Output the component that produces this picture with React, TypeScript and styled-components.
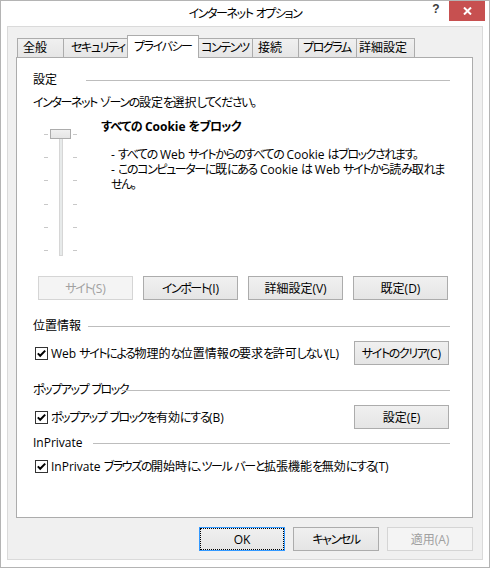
import React from "react";
import styled, { createGlobalStyle } from "styled-components";

const FONT = `"Open Sans", "Noto Sans CJK JP", sans-serif`;

const GlobalStyle = createGlobalStyle`
  html, body { margin: 0; padding: 0; background: #ffffff; }
  body {
    font-family: ${FONT};
    font-size: 12px;
    color: #000;
    font-feature-settings: "palt" 1;
  }
  * { box-sizing: border-box; }
`;

/* Kana runs are set tighter, as the condensed kana of the original UI font */
const Kana = styled.span`
  letter-spacing: -1.4px;
`;

const jp = (s: string) =>
  s.split(/([\u3000-\u30ff]+)/).map((part, i) =>
    /[\u3000-\u30ff]/.test(part) ? <Kana key={i}>{part}</Kana> : part
  );

const Window = styled.div`
  width: 490px;
  height: 568px;
  border: 1px solid #b4b4b4;
  background: #ffffff;
  display: flex;
  flex-direction: column;
`;

const TitleBar = styled.div`
  height: 25px;
  flex: none;
  display: grid;
  grid-template-columns: 1fr auto 1fr;
  align-items: start;
`;

const TitleText = styled.div`
  grid-column: 2;
  margin-top: 5px;
  line-height: 15px;
  white-space: nowrap;
`;

const TitleControls = styled.div`
  grid-column: 3;
  justify-self: end;
  display: flex;
  align-items: flex-start;
  margin-right: 4px;
`;

const HelpButton = styled.div`
  width: 26px;
  height: 20px;
  display: flex;
  justify-content: center;
  padding-top: 2px;
  font-family: "Liberation Sans", sans-serif;
  font-weight: bold;
  font-size: 12px;
  line-height: 12px;
  color: #3c3c3c;
`;

const CloseButton = styled.div`
  width: 36px;
  height: 20px;
  background: #c75050;
  display: flex;
  align-items: center;
  justify-content: center;
`;

const Client = styled.div`
  flex: 1;
  margin: 0 6px 7px 6px;
  background: #f0f0f0;
  border: 1px solid #dadada;
  padding: 8px 9px 8px 8px;
  display: flex;
  flex-direction: column;
`;

const TabStrip = styled.div`
  height: 23px;
  flex: none;
  display: flex;
  align-items: flex-end;
  padding-left: 1px;
`;

const Tab = styled.div<{ $w: number; $pl: number; $active?: boolean }>`
  position: relative;
  flex: none;
  width: ${(p) => p.$w + (p.$active ? 4 : 0)}px;
  height: ${(p) => (p.$active ? 23 : 20)}px;
  margin-left: ${(p) => (p.$active ? -3 : -1)}px;
  margin-right: ${(p) => (p.$active ? -2 : 0)}px;
  z-index: ${(p) => (p.$active ? 2 : 0)};
  border: 1px solid #acacac;
  border-bottom: none;
  background: ${(p) =>
    p.$active ? "#ffffff" : "linear-gradient(#f0f0f0, #e5e5e5)"};
  padding-top: ${(p) => (p.$active ? 3 : 1)}px;
  padding-left: ${(p) => p.$pl}px;
  line-height: 15px;
  white-space: nowrap;
  &:first-child { margin-left: 0; }
`;

const Pane = styled.div`
  position: relative;
  z-index: 1;
  flex: 1;
  margin-top: -1px;
  background: #ffffff;
  border: 1px solid #acacac;
  padding: 14px 22px 0 16px;
  display: flex;
  flex-direction: column;
`;

const SectionHeader = styled.div<{ $label: number; $mt: number }>`
  display: grid;
  grid-template-columns: ${(p) => p.$label}px 1fr;
  align-items: center;
  height: 15px;
  line-height: 15px;
  margin-top: ${(p) => p.$mt}px;
  white-space: nowrap;
`;

const Rule = styled.div`
  height: 1px;
  background: #bdbdbd;
  margin-top: 1px;
`;

const Text = styled.div<{ $mt?: number }>`
  line-height: 15px;
  margin-top: ${(p) => p.$mt ?? 0}px;
  white-space: nowrap;
`;

const SliderBlock = styled.div`
  display: flex;
  margin-top: 9px;
`;

const SliderBox = styled.div`
  position: relative;
  flex: none;
  width: 33px;
  height: 128px;
  margin-left: 11px;
  margin-top: 9px;
`;

const TickColumn = styled.div`
  height: 100%;
  display: flex;
  flex-direction: column;
  justify-content: space-between;
  padding: 6px 0 5px 0;
`;

const TickRow = styled.div`
  height: 1px;
  display: flex;
  justify-content: space-between;
`;

const Tick = styled.span`
  width: 4px;
  height: 1px;
  background: #c8c8c8;
`;

const Track = styled.div`
  position: absolute;
  left: 15px;
  top: 9px;
  bottom: 0;
  width: 4px;
  background: #e7eaea;
  border: 1px solid #d6d6d6;
`;

const Thumb = styled.div`
  position: absolute;
  left: 6px;
  top: 1px;
  width: 21px;
  height: 10px;
  background: linear-gradient(#f0f0f0, #e5e5e5);
  border: 1px solid #acacac;
`;

const LevelText = styled.div`
  margin-left: 24px;
  display: flex;
  flex-direction: column;
`;

const LevelTitle = styled.div`
  font-weight: bold;
  line-height: 15px;
  white-space: nowrap;
  ${Kana} { letter-spacing: -0.7px; }
`;

const LevelDesc = styled.div`
  margin-top: 13px;
  padding-left: 10px;
  line-height: 15px;
  white-space: nowrap;
`;

const ButtonRow = styled.div`
  display: flex;
  gap: 10px;
  padding-left: 5px;
  margin-top: 20px;
`;

const Button = styled.div<{ $w: number; $disabled?: boolean; $focused?: boolean }>`
  width: ${(p) => p.$w}px;
  height: 24px;
  flex: none;
  display: flex;
  align-items: center;
  justify-content: center;
  white-space: nowrap;
  line-height: 15px;
  border: 1px solid
    ${(p) => (p.$focused ? "#3399ff" : p.$disabled ? "#d5d5d5" : "#acacac")};
  background: ${(p) =>
    p.$disabled ? "#f4f4f4" : "linear-gradient(#f0f0f0, #e5e5e5)"};
  color: ${(p) => (p.$disabled ? "#a0a0a0" : "#000")};
  outline: ${(p) => (p.$focused ? "1px dotted #000" : "none")};
  outline-offset: -2px;
`;

const ButtonLabel = styled.span`
  white-space: nowrap;
`;

const OptionRow = styled.div<{ $mt: number }>`
  display: flex;
  align-items: center;
  justify-content: space-between;
  margin-top: ${(p) => p.$mt}px;
  padding-left: 2px;
  padding-right: 1px;
  min-height: 15px;
`;

const CheckLabel = styled.label`
  display: flex;
  align-items: center;
  gap: 3px;
  line-height: 15px;
`;

const CheckText = styled.span`
  white-space: nowrap;
`;

const CheckBox = styled.span`
  width: 13px;
  height: 13px;
  flex: none;
  border: 1px solid #333333;
  background: #ffffff;
  display: flex;
  align-items: center;
  justify-content: center;
`;

const Footer = styled.div`
  flex: none;
  margin-top: 9px;
  display: flex;
  justify-content: flex-end;
  gap: 8px;
`;

const Check = ({ label }: { label: string }) => (
  <CheckLabel>
    <CheckBox>
      <svg width="11" height="11" viewBox="0 0 11 11">
        <polyline
          points="1.8,5.4 4.2,7.8 9.2,2.6"
          fill="none"
          stroke="#000"
          strokeWidth="2"
        />
      </svg>
    </CheckBox>
    <CheckText>{jp(label)}</CheckText>
  </CheckLabel>
);

const Btn = ({
  w,
  label,
  disabled,
  focused,
}: {
  w: number;
  label: string;
  disabled?: boolean;
  focused?: boolean;
}) => (
  <Button $w={w} $disabled={disabled} $focused={focused}>
    <ButtonLabel>{jp(label)}</ButtonLabel>
  </Button>
);

const tabs: { label: string; w: number; pl: number; active?: boolean }[] = [
  { label: "全般", w: 47, pl: 5 },
  { label: "セキュリティ", w: 67, pl: 7 },
  { label: "プライバシー", w: 68, pl: 6, active: true },
  { label: "コンテンツ", w: 57, pl: 4 },
  { label: "接続", w: 47, pl: 5 },
  { label: "プログラム", w: 59, pl: 4 },
  { label: "詳細設定", w: 59, pl: 2 },
];

export default function App() {
  return (
    <>
      <GlobalStyle />
      <Window>
        <TitleBar>
          <TitleText>{jp("インターネット オプション")}</TitleText>
          <TitleControls>
            <HelpButton>?</HelpButton>
            <CloseButton>
              <svg width="9" height="8" viewBox="0 0 9 8">
                <path d="M1 0.5 L8 7.5 M8 0.5 L1 7.5" stroke="#fff" strokeWidth="2" />
              </svg>
            </CloseButton>
          </TitleControls>
        </TitleBar>
        <Client>
          <TabStrip>
            {tabs.map((t) => (
              <Tab key={t.label} $w={t.w} $pl={t.pl} $active={t.active}>
                {jp(t.label)}
              </Tab>
            ))}
          </TabStrip>
          <Pane>
            <SectionHeader $label={53} $mt={0}>
              <span>設定</span>
              <Rule />
            </SectionHeader>
            <Text $mt={8}>{jp("インターネット ゾーンの設定を選択してください。")}</Text>
            <SliderBlock>
              <SliderBox>
                <TickColumn>
                  {[0, 1, 2, 3, 4, 5].map((i) => (
                    <TickRow key={i}>
                      <Tick />
                      <Tick />
                    </TickRow>
                  ))}
                </TickColumn>
                <Track />
                <Thumb />
              </SliderBox>
              <LevelText>
                <LevelTitle>{jp("すべての Cookie をブロック")}</LevelTitle>
                <LevelDesc>
                  {jp("- すべての Web サイトからのすべての Cookie はブロックされます。")}
                  <br />
                  {jp("- このコンピューターに既にある Cookie は Web サイトから読み取れま")}
                  <br />
                  {jp("せん。")}
                </LevelDesc>
              </LevelText>
            </SliderBlock>
            <ButtonRow>
              <Btn w={95} label="サイト(S)" disabled />
              <Btn w={95} label="インポート(I)" />
              <Btn w={95} label="詳細設定(V)" />
              <Btn w={95} label="既定(D)" />
            </ButtonRow>

            <SectionHeader $label={55} $mt={18}>
              <span>位置情報</span>
              <Rule />
            </SectionHeader>
            <OptionRow $mt={8}>
              <Check label="Web サイトによる物理的な位置情報の要求を許可しない(L)" />
              <Btn w={95} label="サイトのクリア(C)" />
            </OptionRow>

            <SectionHeader $label={89} $mt={17}>
              <span>{jp("ポップアップ ブロック")}</span>
              <Rule />
            </SectionHeader>
            <OptionRow $mt={8}>
              <Check label="ポップアップ ブロックを有効にする(B)" />
              <Btn w={95} label="設定(E)" />
            </OptionRow>

            <SectionHeader $label={60} $mt={6}>
              <span>InPrivate</span>
              <Rule />
            </SectionHeader>
            <OptionRow $mt={9}>
              <Check label="InPrivate ブラウズの開始時に、ツール バーと拡張機能を無効にする(T)" />
            </OptionRow>
          </Pane>
          <Footer>
            <Btn w={86} label="OK" focused />
            <Btn w={86} label="キャンセル" />
            <Btn w={86} label="適用(A)" disabled />
          </Footer>
        </Client>
      </Window>
    </>
  );
}
